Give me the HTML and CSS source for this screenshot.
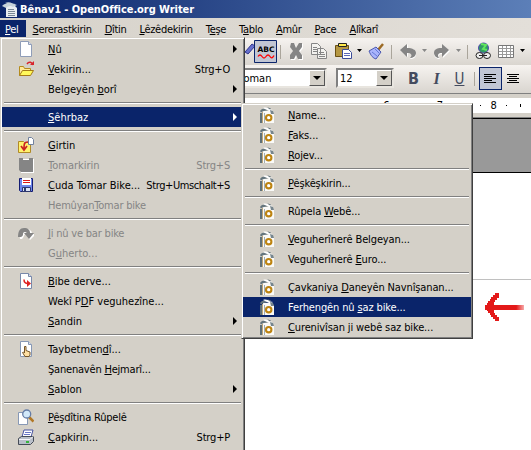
FILE: index.html
```html
<!DOCTYPE html>
<html lang="ku">
<head>
<meta charset="utf-8">
<title>Bênav1 - OpenOffice.org Writer</title>
<link rel="stylesheet" href="styles.css">
</head>
<body>
<svg class="defs" aria-hidden="true">
  <symbol id="wizard" viewBox="0 0 16 16">
    <path d="M4 4h9l2 3v9H4z" fill="#fafaf8"/>
    <path d="M1 6h2v10H1z" fill="#5f7078"/>
    <path d="M3 5h1v11H3z" fill="#b9a57c"/>
    <path d="M5 6h1v10H5z" fill="#a3adb2"/>
    <path d="M1 4c3-4 5-1 8-3.500l3 1c-2 3-6 1-10 4z" fill="#65767e"/>
    <path d="M4 1c3-1 5 0 7 1.500l3 .5-3 1.500-4-2z" fill="#fff"/>
    <path d="M11 3l3 1 1 3h-3z" fill="#76858d"/>
    <circle cx="9.700" cy="10.700" r="2.700" fill="#fff" stroke="#bd8412" stroke-width="2.100"/>
  </symbol>
</svg>
<div class="window">
  <header class="titlebar">
    <svg class="app" viewBox="0 0 16 16"><path d="M4 4h8l3 3v9H4z" fill="#e9edf1"/><path d="M0 5c4-4 6 0 9-3l4 1c-3 3-6 1-9 4zM3 2c4-2 7 0 12 2l-4 2z" fill="#c6d2d9"/><path d="M6 8.500h6M6 10.500h7M6 12.500h7M6 14.500h7" stroke="#788795"/></svg>
    <span>Bênav1 - OpenOffice.org Writer</span>
  </header>
  <nav class="menubar">
    <span class="open"><u>P</u>el</span><span><u>S</u>ererastkirin</span><span><u>D</u>îtin</span><span><u>L</u>êzêdekirin</span><span>T<u>e</u>şe</span><span>T<u>a</u>blo</span><span><u>A</u>mûr</span><span><u>P</u>ace</span><span><u>A</u>lîkarî</span>
  </nav>
  <div class="toolbar standard">
    <svg viewBox="0 0 290 26" width="290" height="26">
      <path d="M4 14l7-8 3 2-7 8z" fill="#6670ce" stroke="#30358c"/>
      <path d="M13.500 2.500h22v22h-22z" fill="#c1c6d4" stroke="#0a246a"/>
      <text x="16.500" y="14" class="abc">ABC</text>
      <path d="M17 18.500q2-3 4 0t4 0 4 0 4-1" fill="none" stroke="#f00" stroke-width="1.300"/>
      <path d="M39.500 7v14M150.500 7v14M226.500 7v14" stroke="#aaa59b"/>
      <path d="M50 5l3 0 2 5 3-5h3v4l-3 4 3 4v4h-4l-2-4-2 4h-4v-4l3-4-3-4z" fill="#fff" transform="translate(1 1)"/>
      <path d="M50 5l3 0 2 5 3-5h3v4l-3 4 3 4v4h-4l-2-4-2 4h-4v-4l3-4-3-4z" fill="#858585"/>
      <g fill="#f3f2ef" stroke="#858585"><path d="M70.500 5.500h6l3 3v8h-9zM76.500 10.500h6l3 3v7h-9z"/><path d="M72 9.500h4M72 11.500h4M72 13.500h4M78 14.500h5M78 16.500h6M78 18.500h6"/></g>
      <path d="M94.500 7.500h13v11h-13z" fill="#b59742" stroke="#695014"/><path d="M97.500 5.500h8v3h-8z" fill="#ffe94b" stroke="#222"/>
      <path d="M101.500 11.500h6l3 3v6h-9z" fill="#fff" stroke="#3c4c98"/><path d="M103 15.500h6M103 17.500h6" stroke="#5968b9"/>
      <path d="M116 11h5l-2.500 3zM279 11h5l-2.500 3z" fill="#000"/>
      <path d="M181 11h5l-2.500 3zM215 11h5l-2.500 3z" fill="#888"/>
      <path d="M142 6l-5 6" stroke="#9c6b25" stroke-width="2.500"/><path d="M128 13l7-4 5 5-5 7c-3-1-5-3-7-8z" fill="#a9b4fb" stroke="#4b58af"/><path d="M131 14l5 4M134 11l4 4" stroke="#657bd7"/>
      <path d="M160 13l7-7v4c5 0 8 2 8 6s-3 5-6 5c3-3 2-6-2-6v4z" fill="#fff"/>
      <path d="M159 12l7-6v4c6 0 9 2 9 5s-3 5-6 5c3-3 1-5-3-5v4z" fill="#858585"/>
      <path d="M209 13l-7-6v4c-6 0-9 2-9 5s3 5 6 5c-3-3-1-5 3-5v4z" fill="#fff"/>
      <path d="M208 12l-7-6v4c-6 0-8 2-8 5s3 5 5 5c-2-3-1-5 3-5v4z" fill="#858585"/>
      <circle cx="242.500" cy="10" r="5" fill="#309a65" stroke="#524cae"/><path d="M240 6l5 1-3 4 4 1" stroke="#61e65c" stroke-width="2" fill="none"/><g fill="#eee" stroke="#222"><ellipse cx="238.500" cy="17.500" rx="3.500" ry="3"/><ellipse cx="246" cy="17.500" rx="3.500" ry="3"/></g><path d="M238 17.500h8" stroke="#222"/>
      <path d="M257.500 7.500h15v12h-15z" fill="#fff" stroke="#777"/><path d="M258 10.500h14M258 13.500h14M258 16.500h14M261.500 8v11M265.500 8v11M269.500 8v11" stroke="#999"/>
    </svg>
  </div>
  <div class="toolbar format">
    <div class="combo font"><span>Roman</span><b></b></div>
    <div class="combo size"><span>12</span><b></b></div>
    <span class="letter bold">B</span><span class="letter italic">I</span><span class="letter under">U</span>
    <i class="bar"></i>
    <span class="align pressed"><svg viewBox="0 0 23 23"><path d="M5 7.500h12M5 9.500h8M5 11.500h12M5 13.500h8M5 15.500h12"/></svg></span>
    <span class="align"><svg viewBox="0 0 23 23"><path d="M5 7.500h12M7 9.500h8M5 11.500h12M7 13.500h8M5 15.500h12"/></svg></span>
  </div>
  <div class="ruler"><div><span>6</span><i></i><em></em><i></i><span>7</span><i></i><em></em><i></i><span>8</span><i></i><em></em></div></div>
  <div class="desk"></div>
  <main class="page"><hr>
    <svg class="arrow" viewBox="0 0 42 30" width="42" height="30" shape-rendering="crispEdges"><defs><linearGradient id="fade"><stop offset="0" stop-color="#e31919"/><stop offset=".8" stop-color="#e31919"/><stop offset="1" stop-color="#f7aaaa"/></linearGradient></defs><path d="M1 13H3V11H4V9H6V7H7V5H9V3H11V1H15V6H13V8H11V10H10V13H40V18H10V21H11V23H13V25H15V29H11V27H9V25H7V23H6V21H4V19H3V18H1z" fill="url(#fade)"/></svg>
  </main>

  <div class="menu main">
    <div class="item"><svg class="ico" viewBox="0 0 16 16"><path d="M2.500.5h8l3 3v12h-11z" fill="#fff" stroke="#8f9db8"/><path d="M10.500.5v3h3" fill="#dde1f0" stroke="#8f9db8"/></svg><span><u>N</u>û</span><i class="sub"></i></div>
    <div class="item"><svg class="ico" viewBox="0 0 16 16"><path d="M1.500 14.500v-9h4l1 2h6v3" fill="#ffe998" stroke="#b58b1b"/><path d="M1.500 14.500l3-5h11l-3 5z" fill="#fff95b" stroke="#a57a17"/><path d="M9 3c2-3 5-2 6 1" fill="none" stroke="#d8232b" stroke-width="1.500"/><path d="M12 4h4V0z" fill="#d8232b"/></svg><span><u>V</u>ekirin...</span><kbd>Strg+O</kbd></div>
    <div class="item"><i class="ico"></i><span>Belgeyên <u>b</u>orî</span><i class="sub"></i></div>
    <hr>
    <div class="item active"><i class="ico"></i><span><u>S</u>êhrbaz</span><i class="sub"></i></div>
    <hr>
    <div class="item"><svg class="ico" viewBox="0 0 16 16"><path d="M.5 4.500h5l1 1h6v10H.5z" fill="#fff26d" stroke="#b18a26"/><path d="M10.500.5h3l2 2v5h-5z" fill="#fff" stroke="#71819e"/><path d="M10 5c-4 0-4 2-4 7M3 9l3 4 3-4" fill="none" stroke="#cc2323" stroke-width="1.700"/></svg><span><u>G</u>irtin</span></div>
    <div class="item off"><svg class="ico" viewBox="0 0 16 16"><path d="M2 2h14v14H3z" fill="#fff"/><path d="M1 1h4v1h6V1h4v14H3l-2-2z" fill="#858585"/><path d="M5 2.500h6" stroke="#fff"/></svg><span><u>T</u>omarkirin</span><kbd>Strg+S</kbd></div>
    <div class="item"><svg class="ico" viewBox="0 0 16 16"><path d="M1.500 1.500h13v13h-12l-1-1z" fill="#6f87ea" stroke="#141c72"/><path d="M4 1h9v7H4z" fill="#fff"/><path d="M5 3.500h7M5 5.500h7" stroke="#dd1717"/><path d="M4.500 10.500h8v4h-8z" fill="#dce2f4" stroke="#2c376f"/><path d="M6 11h2v4H6z" fill="#2c376f"/></svg><span><u>C</u>uda Tomar Bike...</span><kbd class="long">Strg+Umschalt+S</kbd></div>
    <div class="item off tight"><i class="ico"></i><span>Hemûyan<u>T</u>omar bike</span></div>
    <hr>
    <div class="item off tight"><svg class="ico" viewBox="0 0 16 16"><path d="M1 13c-1-6 1-10 6-10 4 0 6 2 6 5h4l-6 6-4-5h3c0-3-3-3-4-1-1 1-1 3-3 5z" transform="translate(1 1)" fill="#fff"/><path d="M0 12c0-6 2-9 6-9s6 2 6 5h4l-5 6-5-6h3c-2-2-4-1-4 1 0 1 0 2-2 3z" fill="#858585"/></svg><span><u>J</u>i nû ve bar bike</span></div>
    <div class="item off"><i class="ico"></i><span>G<u>u</u>herto...</span></div>
    <hr>
    <div class="item"><svg class="ico" viewBox="0 0 16 16"><path d="M2.500.5h8l3 3v12h-11z" fill="#fff" stroke="#7888aa"/><path d="M10.500.5v3h3" fill="#dde1f0" stroke="#7888aa"/><path d="M6 6.500c0 3 1 4 4 4" fill="none" stroke="#df2020" stroke-width="1.500"/><path d="M9 7l4 3.500L9 14z" fill="#df2020"/></svg><span><u>B</u>ibe derve...</span></div>
    <div class="item"><i class="ico"></i><span>Wekî P<u>D</u>F veguhezîne...</span></div>
    <div class="item"><i class="ico"></i><span><u>S</u>andin</span><i class="sub"></i></div>
    <hr>
    <div class="item"><svg class="ico" viewBox="0 0 16 16"><path d="M2.500.5h8l3 3v12h-11z" fill="#fff" stroke="#8798b5"/><path d="M10.500.5v3h3" fill="#dde1f0" stroke="#8798b5"/><path d="M6.500 5.500h1.500v4l4 1.500v3l-1 1.500H7l-2.500-4 1-.5 1 1z" fill="#ffe0a3" stroke="#74552a"/></svg><span>Taybetmen<u>d</u>î...</span></div>
    <div class="item tight"><i class="ico"></i><span>Şanenavên <u>H</u>ejmarî...</span></div>
    <div class="item"><i class="ico"></i><span><u>S</u>ablon</span><i class="sub"></i></div>
    <hr>
    <div class="item tight"><svg class="ico" viewBox="0 0 16 16"><path d="M.5 3.500h9v12h-9z" fill="#fff" stroke="#8798b5"/><path d="M11 8l4.500 4.500" stroke="#b17724" stroke-width="2.500"/><circle cx="8.700" cy="5" r="4" fill="#d2e9fa" stroke="#657da7" stroke-width="1.300"/></svg><span><u>P</u>êşdîtina Rûpelê</span></div>
    <div class="item"><svg class="ico" viewBox="0 0 16 16"><path d="M4 8l2-7h9l-2 7z" fill="#fff" stroke="#4652a1"/><path d="M7 3.500h6M6 5.500h6" stroke="#6876c6"/><path d="M.5 9.500l3-2h12v5l-3 3H.5z" fill="#b9bfc9" stroke="#454b56"/><path d="M1 10.500h11l3-3" fill="none" stroke="#f7f7fa"/><path d="M8 12h3v2H8z" fill="#36b53c"/></svg><span><u>Ç</u>apkirin...</span><kbd>Strg+P</kbd></div>
    <div class="item"><svg class="ico" viewBox="0 0 16 16"><path d="M5.500 1.500h8v10h-11z" fill="#aeb6c4" stroke="#6d7787"/></svg></div>
  </div>

  <div class="menu wizards">
    <div class="item"><svg class="ico"><use href="#wizard"/></svg><span><u>N</u>ame...</span></div>
    <div class="item"><svg class="ico"><use href="#wizard"/></svg><span><u>F</u>aks...</span></div>
    <div class="item"><svg class="ico"><use href="#wizard"/></svg><span><u>R</u>ojev...</span></div>
    <hr>
    <div class="item"><svg class="ico"><use href="#wizard"/></svg><span><u>P</u>êşkêşkirin...</span></div>
    <hr>
    <div class="item"><svg class="ico"><use href="#wizard"/></svg><span>Rûpela <u>W</u>ebê...</span></div>
    <hr>
    <div class="item"><svg class="ico"><use href="#wizard"/></svg><span><u>V</u>eguherînerê Belgeyan...</span></div>
    <div class="item"><svg class="ico"><use href="#wizard"/></svg><span>Veguherînerê <u>E</u>uro...</span></div>
    <hr>
    <div class="item"><svg class="ico"><use href="#wizard"/></svg><span>Çavkaniya <u>D</u>aneyên Navnîşanan...</span></div>
    <div class="item active"><svg class="ico"><use href="#wizard"/></svg><span>Ferhengên nû <u>s</u>az bike...</span></div>
    <div class="item"><svg class="ico"><use href="#wizard"/></svg><span><u>C</u>urenivîsan ji webê saz bike...</span></div>
  </div>
</div>
</body>
</html>
```
FILE: styles.css
```css
* { box-sizing: border-box; }
body {
  margin: 0;
  font: 11px/20px "DejaVu Sans Condensed", "DejaVu Sans", sans-serif;
  font-stretch: condensed;
  color: #000;
}
u { text-decoration: underline; text-underline-offset: 1px; text-decoration-thickness: 1px; text-decoration-skip-ink: none; }
i, em { font-style: normal; }
.defs { position: absolute; width: 0; height: 0; }
.window { position: relative; width: 531px; height: 450px; overflow: hidden; background: #d4d0c8; }

.titlebar {
  display: flex;
  align-items: center;
  height: 18px;
  padding-left: 2px;
  gap: 2px;
  background: linear-gradient(90deg, #0a246a, #5c7fb8);
  color: #fff;
  font-weight: bold;
  letter-spacing: -.06px;
  white-space: nowrap;
}
.titlebar span { padding-top: 1px; }
.app { width: 16px; height: 16px; }

.menubar { display: flex; height: 20px; padding-top: 2px; background: linear-gradient(90deg, #d6d2ca, #e3dfd9); letter-spacing: -.3px; }
.menubar span { height: 17px; padding: 0 6.500px; line-height: 19px; white-space: nowrap; }
.menubar .open { width: 26px; padding: 0 0 0 5px; background: #0a246a; color: #fff; }

.toolbar { background: linear-gradient(#f6f3f0, #d9d5cf); }
.standard { height: 27px; padding-left: 241px; }
.standard svg { display: block; }
.abc { font: bold 7.500px "DejaVu Sans", sans-serif; }
.format { display: flex; align-items: flex-start; height: 28px; padding: 3px 0 0 200px; }
.combo { display: flex; height: 20px; background: #fff; border: 2px solid #808080; border-right-color: #e8e5df; border-bottom-color: #e8e5df; line-height: 18px; }
.combo span { flex: 1; padding-left: 2px; overflow: hidden; }
.combo b { width: 16px; background: #d4d0c8; border: 1px solid; border-color: #fff #555 #555 #fff; display: grid; place-items: center; }
.combo b::after { content: ""; border: 4px solid transparent; border-top-color: #000; border-bottom: 0; }
.font { width: 127px; }
.font span { padding-left: 35px; }
.size { width: 58px; margin-left: 9px; }
.letter { width: 23px; text-align: center; color: #444b5e; font: 16px/22px "DejaVu Sans Condensed", sans-serif; }
.bold { margin-left: 8px; font-weight: bold; }
.italic { font-family: "Liberation Serif", serif; font-style: italic; font-weight: bold; }
.under { font-size: 15px; text-decoration: underline; }
.bar { width: 1px; height: 14px; margin: 4px 4px 0 3px; background: #aaa59b; }
.align { width: 23px; height: 23px; margin-top: -1px; }
.align svg { display: block; width: 23px; height: 23px; stroke: #000; }
.pressed { background: #c1c6d4; box-shadow: inset 0 0 0 1px #0a246a; }

.ruler { height: 26px; padding-top: 4px; border-top: 1px solid #808080; border-bottom: 1px solid #000; background: linear-gradient(#808080, #808080) bottom / 100% 1px no-repeat; }
.ruler div { display: grid; grid-template-columns: repeat(11, 13.400px); place-items: center; justify-content: end; height: 15px; background: #fff; padding-right: 4px; line-height: 15px; }
.ruler i { width: 1px; height: 1px; background: #000; }
.ruler em { width: 1px; height: 3px; background: #000; }
.desk { height: 54px; background: #999; border-bottom: 1px solid #000; }
.page { height: 277px; background: #fff; padding-top: 106px; }
.page hr { margin: 0; border: 0; height: 1px; background: #c0c0c0; }
.arrow { display: block; margin: 12px 0 0 484px; }

.menu { position: absolute; background: #d4d0c8; border: 1px solid; border-color: #d4d0c8 #404040 #404040 #d4d0c8; box-shadow: inset 1px 1px #fff, inset -1px -1px #808080; padding: 1px; }
.menu hr { height: 2px; margin: 3px 2px; border: 0; border-top: 1px solid #808080; background: #fff; }
.main { left: 0; top: 37px; width: 245px; height: 440px; }
.wizards { left: 241px; top: 103px; width: 232px; height: 236px; letter-spacing: -.13px; }
.item { display: flex; align-items: center; height: 20px; padding: 0 13px 0 16px; white-space: nowrap; }
.item span { flex: 1; line-height: 19px; padding-top: 1px; }
.ico { flex: none; width: 16px; height: 16px; margin-right: 14px; }
.wizards .ico { margin-right: 13px; }
.item kbd { font: inherit; line-height: 19px; padding-top: 1px; letter-spacing: -.2px; }
.item .long { letter-spacing: -.4px; }
.tight { letter-spacing: -.2px; }
.sub { margin-right: -7px; border: 4px solid transparent; border-left: 4px solid #000; border-right: 0; }
.active { background: #0a246a; color: #fff; }
.active .sub { border-left-color: #fff; }
.off { color: #858585; }
```
